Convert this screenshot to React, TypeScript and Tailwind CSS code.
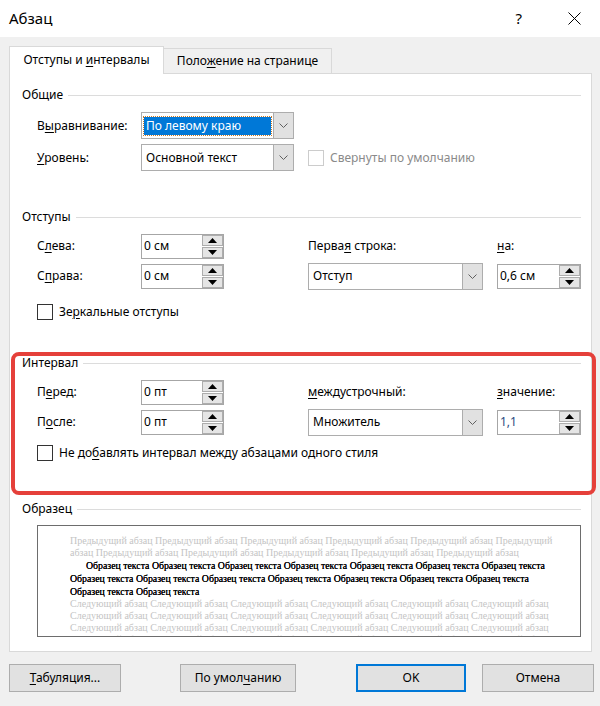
import React from "react";

const Chevron = () => (
  <svg width="9" height="5" viewBox="0 0 9 5">
    <path d="M0.5 0.5 L4.5 4.5 L8.5 0.5" fill="none" stroke="#606060" strokeWidth="1" />
  </svg>
);

const Up = () => (
  <svg width="9" height="5" viewBox="0 0 9 5">
    <polygon points="0,5 4.5,0 9,5" fill="#000" />
  </svg>
);
const Down = () => (
  <svg width="9" height="5" viewBox="0 0 9 5">
    <polygon points="0,0 4.5,5 9,0" fill="#000" />
  </svg>
);

function Spinner({ value, w = "w-[83px]", blue = false }: { value: string; w?: string; blue?: boolean }) {
  return (
    <div className={`flex ${w} h-[25px] border border-[#a6a6a6] bg-white`}>
      <div className={`flex-1 flex items-center pl-[2px] text-[12px] ${blue ? "text-[#2a4a7f]" : "text-black"}`}>{value}</div>
      <div className="w-[21px] flex flex-col gap-px">
        <div className="flex-1 bg-[#e5e5e5] border border-[#adadad] flex items-center justify-center">
          <Up />
        </div>
        <div className="flex-1 bg-[#e5e5e5] border border-[#adadad] flex items-center justify-center">
          <Down />
        </div>
      </div>
    </div>
  );
}

function Combo({ value, w, selected = false }: { value: string; w: string; selected?: boolean }) {
  return (
    <div className={`flex ${w} h-[27px] border border-[#adadad] bg-white`}>
      <div className="flex-1 flex items-center pl-[2px] pr-[2px]">
        {selected ? (
          <div className="h-[18px] w-full flex items-center bg-[#0078d7] text-white pl-[2px] outline outline-1 outline-dotted outline-[#c87b2a]">
            {value}
          </div>
        ) : (
          <div className="pl-[2px]">{value}</div>
        )}
      </div>
      <div className="w-[20px] bg-[#e1e1e1] border-l border-[#adadad] flex items-center justify-center">
        <Chevron />
      </div>
    </div>
  );
}

function Header({ title }: { title: string }) {
  return (
    <div className="flex items-center h-[16px] pl-[12px] pr-[10px]">
      <span className="leading-[16px]">{title}</span>
      <div className="flex-1 h-px bg-[#dcdcdc] ml-[5px]" />
    </div>
  );
}

function Check({ children, disabled = false }: { children: React.ReactNode; disabled?: boolean }) {
  return (
    <div className="flex items-center">
      <div className={`w-[16px] h-[16px] border bg-white ${disabled ? "border-[#cccccc]" : "border-[#333333]"}`} />
      <span className={`ml-[6px] ${disabled ? "text-[#8a8a8a]" : ""}`}>{children}</span>
    </div>
  );
}

const U = ({ children }: { children: React.ReactNode }) => (
  <span className="underline underline-offset-2 decoration-1">{children}</span>
);

const Btn = ({ children, w, ml, primary = false }: { children: React.ReactNode; w: string; ml: string; primary?: boolean }) => (
  <div
    className={`${w} ${ml} h-[28px] flex items-center justify-center bg-[#e1e1e1] ${
      primary ? "border-2 border-[#0078d7]" : "border border-[#adadad]"
    }`}
  >
    {children}
  </div>
);

const prev = "Предыдущий абзац ";
const samp = "Образец текста ";
const next = "Следующий абзац ";

export default function App() {
  return (
    <div className="relative w-[600px] h-[706px] bg-[#f0f0f0] text-[12px] text-black font-['Noto_Sans',sans-serif] overflow-hidden">
      {/* Title bar */}
      <div className="h-[37px] bg-white flex items-center pl-[9px]">
        <span className="text-[15px] leading-none">Абзац</span>
        <div className="flex-1" />
        <span className="text-[15px] leading-none mr-[46px]">?</span>
        <svg width="13" height="13" viewBox="0 0 13 13" className="mr-[19px]">
          <path d="M0.5 0.5 L12.5 12.5 M12.5 0.5 L0.5 12.5" stroke="#000" strokeWidth="1" />
        </svg>
      </div>

      {/* Tabs */}
      <div className="flex items-end h-[27px] mt-[9px] pl-[9px]">
        <div className="relative z-10 w-[155px] h-[28px] -mb-px bg-white border border-b-0 border-[#d9d9d9] flex items-center justify-center pb-[2px]">
          <span>
            Отступы и <U>и</U>нтервалы
          </span>
        </div>
        <div className="w-[168px] h-[25px] bg-[#f0f0f0] border border-l-0 border-b-0 border-[#d9d9d9] flex items-center justify-center">
          <span>
            Поло<U>ж</U>ение на странице
          </span>
        </div>
      </div>

      {/* Panel */}
      <div className="ml-[9px] w-[583px] h-[579px] bg-white border border-[#d9d9d9] flex flex-col">
        <div className="mt-[13px]">
          <Header title="Общие" />
        </div>
        <div className="pl-[27px] mt-[9px] flex flex-col gap-[5px]">
          <div className="flex items-center h-[27px]">
            <div className="w-[104px]">
              В<U>ы</U>равнивание:
            </div>
            <Combo value="По левому краю" w="w-[153px]" selected />
          </div>
          <div className="flex items-center h-[27px]">
            <div className="w-[104px]">
              <U>У</U>ровень:
            </div>
            <Combo value="Основной текст" w="w-[153px]" />
            <div className="ml-[14px]">
              <Check disabled>Свернуты по умолчанию</Check>
            </div>
          </div>
        </div>

        <div className="mt-[38px]">
          <Header title="Отступы" />
        </div>
        <div className="pl-[27px] mt-[8px] flex flex-col gap-[4px]">
          <div className="flex items-center h-[26px]">
            <div className="w-[104px]">
              С<U>л</U>ева:
            </div>
            <Spinner value="0 см" />
            <div className="ml-[84px] w-[189px]">
              Перва<U>я</U> строка:
            </div>
            <div>
              <U>н</U>а:
            </div>
          </div>
          <div className="flex items-center h-[26px]">
            <div className="w-[104px]">
              С<U>п</U>рава:
            </div>
            <Spinner value="0 см" />
            <div className="ml-[84px]">
              <Combo value="Отступ" w="w-[175px]" />
            </div>
            <div className="ml-[14px]">
              <Spinner value="0,6 см" w="w-[84px]" />
            </div>
          </div>
        </div>
        <div className="pl-[27px] mt-[14px]">
          <Check>
            Зе<U>р</U>кальные отступы
          </Check>
        </div>

        <div className="mt-[34px]">
          <Header title="Интервал" />
        </div>
        <div className="pl-[27px] mt-[8px] flex flex-col gap-[4px]">
          <div className="flex items-center h-[26px]">
            <div className="w-[104px]">
              П<U>е</U>ред:
            </div>
            <Spinner value="0 пт" />
            <div className="ml-[84px] w-[189px]">
              <U>м</U>еждустрочный:
            </div>
            <div>
              <U>з</U>начение:
            </div>
          </div>
          <div className="flex items-center h-[26px]">
            <div className="w-[104px]">
              П<U>о</U>сле:
            </div>
            <Spinner value="0 пт" />
            <div className="ml-[84px]">
              <Combo value="Множитель" w="w-[175px]" />
            </div>
            <div className="ml-[14px]">
              <Spinner value="1,1" w="w-[84px]" blue />
            </div>
          </div>
        </div>
        <div className="pl-[27px] mt-[9px]">
          <Check>
            Не до<U>б</U>авлять интервал между абзацами одного стиля
          </Check>
        </div>

        <div className="mt-[39px]">
          <Header title="Образец" />
        </div>
        <div className="ml-[27px] mt-[8px] w-[544px] h-[112px] border border-[#6d6d6d] bg-white overflow-hidden pl-[32px] pt-[9px] font-['Liberation_Serif',serif] text-[10px] whitespace-nowrap">
          <div className="text-[#c4c4c4] leading-[12px]">{prev.repeat(5) + "Предыдущий"}</div>
          <div className="text-[#c4c4c4] leading-[12px]">{"абзац " + prev.repeat(4) + "Предыдущий абзац"}</div>
          <div className="text-[#000] text-[9.8px] leading-[13px] pl-[16px] [text-shadow:0_0_0.4px_#000]">{samp.repeat(7).trim()}</div>
          <div className="text-[#000] text-[9.8px] leading-[13px] [text-shadow:0_0_0.4px_#000]">{samp.repeat(7).trim()}</div>
          <div className="text-[#000] text-[9.8px] leading-[13px] [text-shadow:0_0_0.4px_#000]">{samp.repeat(2).trim()}</div>
          <div className="text-[#c4c4c4] leading-[12px]">{next.repeat(6).trim()}</div>
          <div className="text-[#c4c4c4] leading-[12px]">{next.repeat(6).trim()}</div>
          <div className="text-[#c4c4c4] leading-[12px]">{next.repeat(6).trim()}</div>
          <div className="text-[#c4c4c4] leading-[12px]">{next.repeat(6).trim()}</div>
        </div>
      </div>

      {/* Buttons */}
      <div className="flex mt-[12px]">
        <Btn w="w-[112px]" ml="ml-[9px]">
          <span>
            <U>Т</U>абуляция...
          </span>
        </Btn>
        <Btn w="w-[116px]" ml="ml-[59px]">
          <span>
            По умол<U>ч</U>анию
          </span>
        </Btn>
        <Btn w="w-[110px]" ml="ml-[60px]" primary>
          OK
        </Btn>
        <Btn w="w-[112px]" ml="ml-[16px]">
          Отмена
        </Btn>
      </div>

      {/* Red annotation frame */}
      <div className="absolute left-[11px] top-[352px] w-[585px] h-[143px] border-4 border-[#e5403a] rounded-[8px] pointer-events-none" />
    </div>
  );
}
